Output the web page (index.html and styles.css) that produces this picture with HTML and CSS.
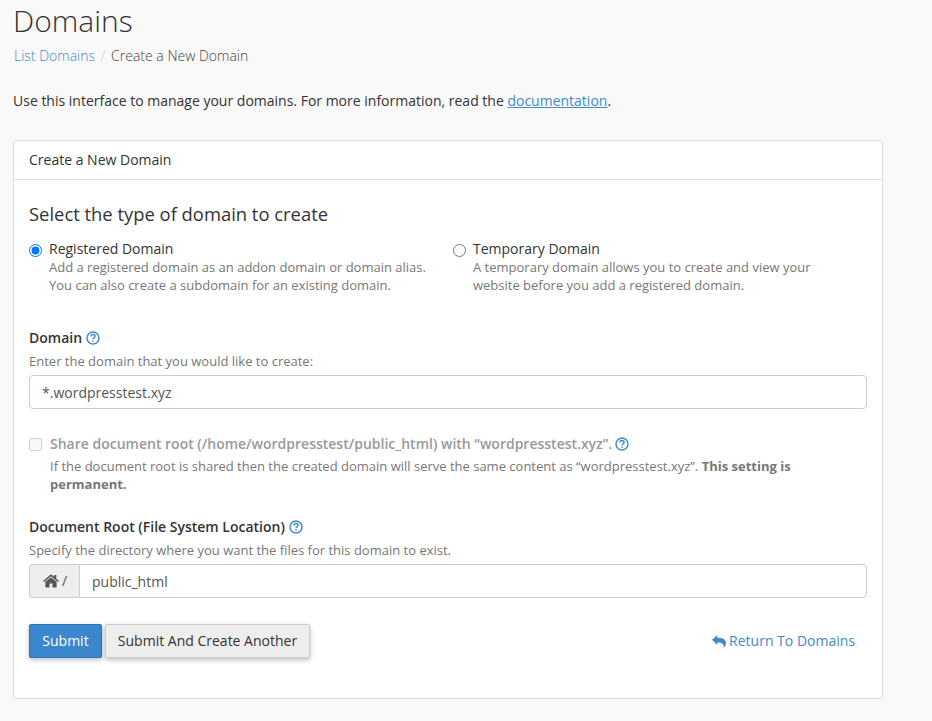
FILE: index.html
```html
<!DOCTYPE html>
<html lang="en">
<head>
    <meta charset="UTF-8">
    <meta name="viewport" content="width=device-width, initial-scale=1.0">
    <title>Domains</title>
    <link rel="stylesheet" href="styles.css">
</head>
<body>

<div class="page">
    <h1>Domains</h1>
    <div class="breadcrumb">
        <a href="#">List Domains</a>
        <span class="divider">/</span>
        <span>Create a New Domain</span>
    </div>
    <p class="intro">Use this interface to manage your domains. For more information, read the <a href="#" class="doc-link">documentation</a>.</p>

    <div class="panel">
        <div class="panel-heading">Create a New Domain</div>
        <div class="panel-body">
            <h2>Select the type of domain to create</h2>
            <div class="type-row">
                <label class="type-option">
                    <input type="radio" name="domainType" checked>
                    <span>
                        <span class="type-title">Registered Domain</span>
                        <span class="type-desc">Add a registered domain as an addon domain or domain alias. You can also create a subdomain for an existing domain.</span>
                    </span>
                </label>
                <label class="type-option">
                    <input type="radio" name="domainType">
                    <span>
                        <span class="type-title">Temporary Domain</span>
                        <span class="type-desc">A temporary domain allows you to create and view your website before you add a registered domain.</span>
                    </span>
                </label>
            </div>

            <div class="form-group domain-group">
                <div class="field-label">Domain
                    <svg class="help" viewBox="0 0 14 14"><circle cx="7" cy="7" r="6" /><path d="M5 5.400c0-1.200 1-1.900 2.100-1.900S9.100 4.200 9.100 5.300c0 1.500-2.100 1.500-2.100 3" /><path d="M7 9.400v1.300" /></svg>
                </div>
                <div class="field-help">Enter the domain that you would like to create:</div>
                <input type="text" class="text-input" value="*.wordpresstest.xyz">
            </div>

            <div class="share-group">
                <input type="checkbox" disabled>
                <div>
                    <div class="share-title">Share document root (/home/wordpresstest/public_html) with “wordpresstest.xyz”.
                        <svg class="help" viewBox="0 0 14 14"><circle cx="7" cy="7" r="6" /><path d="M5 5.400c0-1.200 1-1.900 2.100-1.900S9.100 4.200 9.100 5.300c0 1.500-2.100 1.500-2.100 3" /><path d="M7 9.400v1.300" /></svg>
                    </div>
                    <div class="share-desc">If the document root is shared then the created domain will serve the same content as “wordpresstest.xyz”. <b>This setting is</b> <b>permanent.</b></div>
                </div>
            </div>

            <div class="form-group root-group">
                <div class="field-label">Document Root (File System Location)
                    <svg class="help" viewBox="0 0 14 14"><circle cx="7" cy="7" r="6" /><path d="M5 5.400c0-1.200 1-1.900 2.100-1.900S9.100 4.200 9.100 5.300c0 1.500-2.100 1.500-2.100 3" /><path d="M7 9.400v1.300" /></svg>
                </div>
                <div class="field-help">Specify the directory where you want the files for this domain to exist.</div>
                <div class="input-group">
                    <span class="addon">
                        <svg class="home" viewBox="0 0 16 14"><path d="M8 3.200 2.400 7.800V13c0 .3.200.5.500.5h3.600V9.600h3v3.900h3.600c.3 0 .5-.2.500-.5V7.800z" /><path d="M8 .3 0 6.900l1 1.200 7-5.800 7 5.800 1-1.200-2.700-2.200V1h-2.100v1.800z" /></svg>
                        /
                    </span>
                    <input type="text" class="text-input" value="public_html">
                </div>
            </div>

            <div class="actions">
                <button class="btn btn-primary">Submit</button>
                <button class="btn btn-default">Submit And Create Another</button>
                <a href="#" class="return-link">
                    <svg class="reply" viewBox="0 0 14 13"><path d="M0 4.700 5.300 0v2.700c4.500 0 8.700 1 8.700 5.500 0 2-1.300 3.700-2.300 4.500.6-3.800-1.700-5.300-6.400-5.300v2.800z" /></svg>
                    Return To Domains
                </a>
            </div>
        </div>
    </div>
</div>

</body>
</html>
```

FILE: styles.css
```css
* {
    box-sizing: border-box;
}
body {
    margin: 0;
    font-family: "Open Sans", sans-serif;
    font-size: 14px;
    line-height: 20px;
    color: #333;
    background-color: #f9f9f9;
}
a {
    color: #428bca;
    text-decoration: none;
}
.page {
    width: 883px;
    padding-left: 13px;
}
h1 {
    margin: 0;
    padding-top: 3px;
    font-size: 30px;
    line-height: 36px;
    font-weight: 300;
}
.breadcrumb {
    margin: 7px 0 0 1px;
    color: #444;
    font-weight: 300;
}
.divider {
    margin: 0 2px;
    color: #ccc;
}
.intro {
    margin: 25px 0 29px;
}
.doc-link {
    text-decoration: underline;
}
.panel {
    background-color: #fff;
    border: 1px solid #ddd;
    border-radius: 3px;
    box-shadow: 0 1px 1px rgba(0,0,0,0.05);
}
.panel-heading {
    height: 39px;
    padding: 9px 15px;
    border-bottom: 1px solid #ddd;
}
.panel-body {
    padding: 23px 15px 40px;
}
h2 {
    margin: 0;
    font-size: 18.4px;
    line-height: 22px;
    font-weight: 400;
    color: #333;
}
.type-row {
    display: flex;
    margin-top: 15px;
}
.type-option {
    flex: none;
    display: flex;
    width: 424px;
    gap: 7px;
}
.type-option input {
    flex: none;
    width: 13px;
    height: 13px;
    margin: 4px 0 0;
}
.type-option > span {
    width: 385px;
}
.type-title {
    display: block;
    line-height: 18px;
}
.type-desc {
    display: block;
    font-size: 13px;
    line-height: 18px;
    color: #777;
}
.form-group {
    margin-top: 24px;
}
.domain-group {
    margin-top: 34px;
}
.field-label {
    font-weight: 600;
    display: flex;
    align-items: center;
    gap: 4px;
}
.help {
    width: 14px;
    height: 14px;
    fill: none;
    stroke: #428bca;
    stroke-width: 1.500;
    vertical-align: -2px;
}
.share-title .help {
    margin-left: -1px;
}
.field-help {
    margin-top: 3px;
    font-size: 13px;
    color: #777;
}
.text-input {
    display: block;
    width: 100%;
    height: 34px;
    margin-top: 4px;
    padding: 6px 12px;
    font: inherit;
    color: #555;
    background-color: #fff;
    border: 1px solid #ccc;
    border-radius: 4px;
}
.share-group {
    display: flex;
    gap: 8px;
    margin-top: 25px;
    color: #999;
}
.share-group input {
    flex: none;
    width: 13px;
    height: 13px;
    margin: 4px 0 0;
}
.share-title {
    font-weight: 600;
}
.share-desc {
    margin-top: 3px;
    font-size: 13px;
    line-height: 18px;
    color: #777;
}
.input-group {
    display: flex;
    margin-top: 4px;
}
.input-group .text-input {
    margin-top: 0;
    border-radius: 0 4px 4px 0;
}
.addon {
    flex: none;
    display: flex;
    align-items: center;
    gap: 3px;
    width: 50px;
    height: 34px;
    padding-left: 13px;
    color: #555;
    background-color: #eee;
    border: 1px solid #ccc;
    border-right: 0;
    border-radius: 4px 0 0 4px;
}
.home {
    width: 16px;
    height: 14px;
    fill: #555;
}
.actions {
    display: flex;
    align-items: center;
    gap: 3px;
    margin-top: 26px;
}
.btn {
    height: 34px;
    padding: 0;
    font: inherit;
    white-space: nowrap;
    border-radius: 2px;
    box-shadow: 0 2px 5px rgba(0,0,0,0.25);
}
.btn-primary {
    width: 73px;
    color: #fff;
    background-color: #3a87cd;
    border: 1px solid #2e77bb;
}
.btn-default {
    width: 205px;
    color: #333;
    background-color: #eee;
    border: 1px solid #ccc;
}
.return-link {
    display: flex;
    align-items: center;
    gap: 3px;
    margin-left: auto;
    margin-right: 12px;
}
.reply {
    width: 14px;
    height: 13px;
    fill: #428bca;
}
```
